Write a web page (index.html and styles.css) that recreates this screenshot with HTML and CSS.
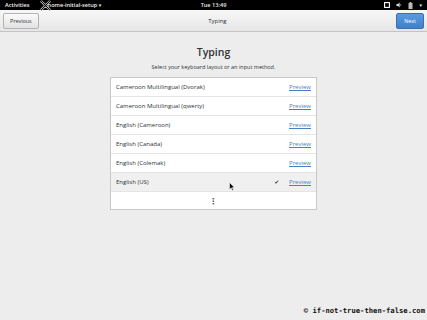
FILE: index.html
```html
<!DOCTYPE html>
<html lang="en">
  <head>
    <meta charset="UTF-8" />
    <meta name="viewport" content="width=device-width, initial-scale=1.0" />
    <title>Typing</title>
    <link rel="stylesheet" href="styles.css">
  </head>
  <body>
    <div class="topbar">
      <div class="topbar-left">
        <span class="activities">Activities</span>
        <span class="appmenu">gnome-initial-setup <span class="caret">▾</span></span>
      </div>
      <span class="clock">Tue 13:49</span>
      <div class="status">
        <svg width="6" height="6" viewBox="0 0 6 6"><rect x="0.6" y="0.6" width="4.8" height="4.8" fill="none" stroke="#fff" stroke-width="1.1"/></svg>
        <svg width="6" height="6" viewBox="0 0 6 6"><path d="M0.5 2 H2 L3.6 0.6 V5.4 L2 4 H0.5 Z" fill="#ddd"/><path d="M4.4 2 Q5.2 3 4.4 4" fill="none" stroke="#999" stroke-width="0.7"/></svg>
        <svg width="5" height="7" viewBox="0 0 5 7"><rect x="1.6" y="0" width="1.8" height="1" fill="#bbb"/><rect x="0.5" y="1" width="4" height="6" rx="0.5" fill="#bbb"/></svg>
        <span class="caret">▾</span>
      </div>
    </div>

    <header class="headerbar">
      <button class="btn">Previous</button>
      <span class="headerbar-title">Typing</span>
      <button class="btn btn-next">Next</button>
    </header>

    <main class="page">
      <h1>Typing</h1>
      <p class="subtitle">Select your keyboard layout or an input method.</p>

      <ul class="layouts">
        <li class="layout"><span class="name">Cameroon Multilingual (Dvorak)</span><a class="preview">Preview</a></li>
        <li class="layout"><span class="name">Cameroon Multilingual (qwerty)</span><a class="preview">Preview</a></li>
        <li class="layout"><span class="name">English (Cameroon)</span><a class="preview">Preview</a></li>
        <li class="layout"><span class="name">English (Canada)</span><a class="preview">Preview</a></li>
        <li class="layout"><span class="name">English (Colemak)</span><a class="preview">Preview</a></li>
        <li class="layout selected"><span class="name">English (US)</span><span class="check">✔</span><a class="preview">Preview</a></li>
        <li class="more">⋮</li>
      </ul>
    </main>

    <div class="watermark">© if-not-true-then-false.com</div>

    <!-- mouse pointers caught in the screenshot -->
    <svg class="pointer pointer-x" width="11" height="11" viewBox="0 0 12 12">
      <path d="M1 1 L11 11 M11 1 L1 11" stroke="#fff" stroke-width="2.4"/>
      <path d="M1 1 L11 11 M11 1 L1 11" stroke="#000" stroke-width="1.2"/>
    </svg>
    <svg class="pointer pointer-arrow" width="6" height="9" viewBox="0 0 6 9">
      <path d="M0.5 0.5 V7.5 L2.2 5.9 L3.4 8.5 L4.4 8 L3.3 5.5 H5.5 Z" fill="#111" stroke="#fff" stroke-width="0.5"/>
    </svg>
  </body>
</html>
```

FILE: styles.css
```css
body {
  margin: 0;
  padding: 0;
  width: 427px;
  height: 320px;
  overflow: hidden;
  position: relative;
  background-color: #ededed;
  font-family: "Open Sans", "DejaVu Sans", sans-serif;
  color: #2e3436;
}
.topbar {
  height: 10px;
  background: #000;
  color: #eee;
  font-size: 5.6px;
  font-weight: 600;
  display: grid;
  grid-template-columns: 1fr auto 1fr;
  align-items: center;
}
.topbar-left {
  display: flex;
  align-items: center;
  gap: 15px;
  padding-left: 5px;
}
.caret {
  font-size: 5px;
}
.status {
  display: flex;
  align-items: center;
  justify-content: flex-end;
  gap: 6px;
  padding-right: 5px;
}
.headerbar {
  height: 21px;
  background: linear-gradient(#f7f7f7, #e6e6e6);
  border-bottom: 1px solid #c4c4c4;
  display: flex;
  align-items: center;
  justify-content: space-between;
  padding: 0 3px;
}
.headerbar-title {
  font-size: 6px;
  color: #2e3436;
}
.btn {
  height: 16px;
  padding: 0 6px;
  font-family: "Open Sans", "DejaVu Sans", sans-serif;
  font-size: 5.4px;
  color: #2e3436;
  background: linear-gradient(#fbfbfb, #e2e2e2);
  border: 1px solid #b3b3b3;
  border-radius: 2px;
}
.btn-next {
  padding: 0 7px;
  color: #fff;
  background: linear-gradient(#5a9be0, #3f7fcc);
  border-color: #3a6fb0;
}
.page {
  display: flex;
  flex-direction: column;
  align-items: center;
}
.page h1 {
  margin: 13px 0 0;
  font-size: 10.5px;
  font-weight: 600;
  line-height: 14px;
  color: #2e3436;
}
.subtitle {
  margin: 4px 0 0;
  font-size: 5.5px;
  line-height: 8px;
  color: #2e3436;
}
.layouts {
  list-style: none;
  margin: 6px 0 0;
  padding: 0;
  width: 205px;
  background: #fff;
  border: 1px solid #c8c8c8;
}
.layout {
  height: 18px;
  border-bottom: 1px solid #e4e4e4;
  display: flex;
  align-items: center;
  padding: 0 5px;
  font-size: 6px;
}
.layout .name {
  flex: 1;
}
.layout.selected {
  background: #f0f0f0;
}
.check {
  font-size: 5.5px;
  margin-right: 10px;
  color: #2e3436;
}
.preview {
  color: #4a7fc1;
  text-decoration: underline;
  font-size: 6px;
}
.more {
  height: 17px;
  display: flex;
  align-items: center;
  justify-content: center;
  font-size: 8px;
  font-weight: bold;
  color: #555;
}
.watermark {
  position: absolute;
  right: 2px;
  bottom: 5px;
  font-family: "DejaVu Sans Mono", monospace;
  font-size: 7.2px;
  font-weight: bold;
  color: #111;
}
.pointer {
  position: absolute;
}
.pointer-x {
  left: 40px;
  top: 0;
}
.pointer-arrow {
  left: 229px;
  top: 182px;
}
```
